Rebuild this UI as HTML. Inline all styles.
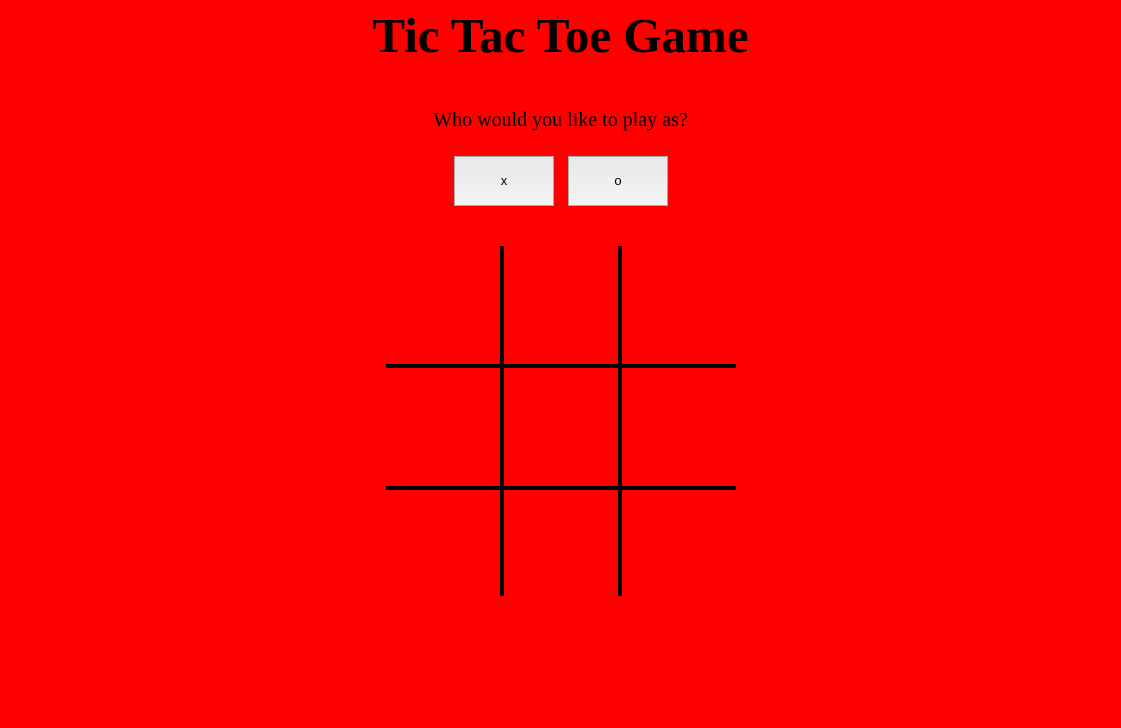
<!DOCTYPE html>
<html><head><style>
html,body{margin:0;padding:0;width:1121px;height:728px;background:#ff0000;overflow:hidden;font-family:"Liberation Serif",serif}
h1{position:absolute;left:0;width:1121px;top:6px;margin:0;text-align:center;font-size:49px;font-weight:bold;line-height:60px}
p{position:absolute;left:0;width:1121px;top:108px;margin:0;text-align:center;font-size:20px;line-height:24px}
.b{position:absolute;top:156px;width:98px;height:48px;border:1px solid #aaa;background:linear-gradient(#e8e8e8,#f4f4f4);font-family:"Liberation Sans",sans-serif;font-size:13px;text-align:center;line-height:48px}
.l{position:absolute;background:#000}
</style></head><body>
<h1>Tic Tac Toe Game</h1>
<p>Who would you like to play as?</p>
<div class="b" style="left:454px">x</div>
<div class="b" style="left:568px">o</div>
<div class="l" style="left:500px;top:246px;width:4px;height:350px"></div>
<div class="l" style="left:618px;top:246px;width:4px;height:350px"></div>
<div class="l" style="left:386px;top:364px;width:350px;height:4px"></div>
<div class="l" style="left:386px;top:486px;width:350px;height:4px"></div>
</body></html>
